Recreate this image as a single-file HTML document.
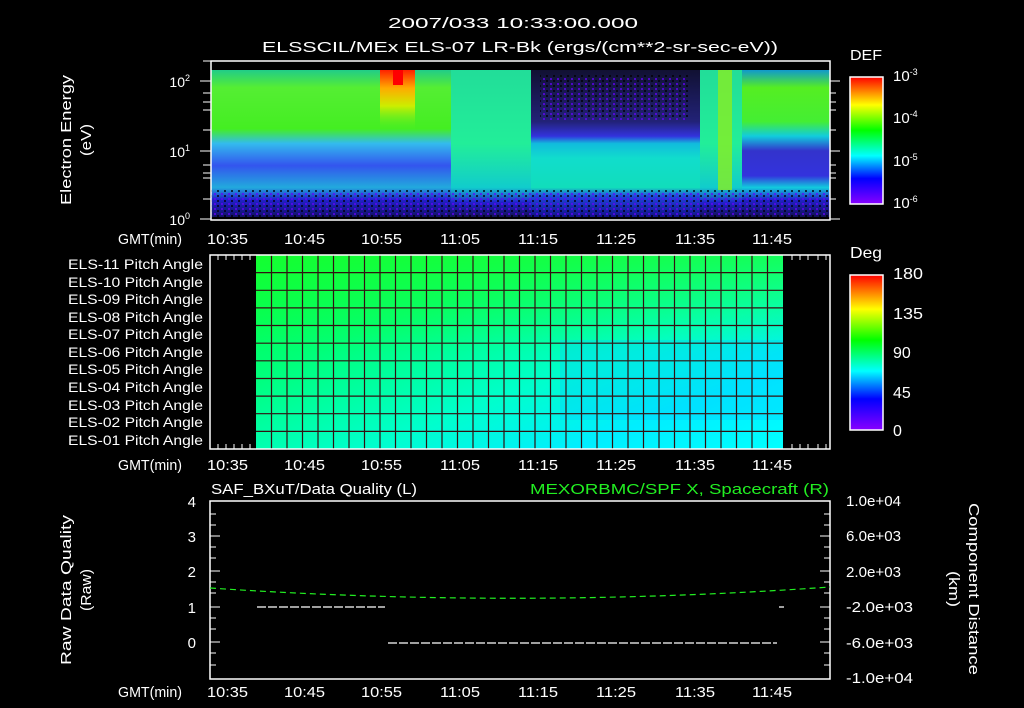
<!DOCTYPE html>
<html><head><meta charset="utf-8"><style>
html,body{margin:0;padding:0;background:#000;}
svg{display:block;font-family:"Liberation Sans",sans-serif;}
</style></head><body>
<svg width="1024" height="708" viewBox="0 0 1024 708" xmlns="http://www.w3.org/2000/svg">
<defs>
<linearGradient id="rb" x1="0" y1="0" x2="0" y2="1">
<stop offset="0" stop-color="#f00"/><stop offset="0.22" stop-color="#ff0"/><stop offset="0.42" stop-color="#0f0"/><stop offset="0.62" stop-color="#0ff"/><stop offset="0.8" stop-color="#00f"/><stop offset="1" stop-color="#80f"/>
</linearGradient>
<linearGradient id="left" x1="0" y1="0" x2="0" y2="1">
<stop offset="0" stop-color="#2c8"/><stop offset="0.12" stop-color="#5e3"/><stop offset="0.4" stop-color="#4e2"/><stop offset="0.5" stop-color="#3be"/><stop offset="0.65" stop-color="#35e"/><stop offset="0.8" stop-color="#2ad"/><stop offset="0.88" stop-color="#22c"/><stop offset="1" stop-color="#116"/>
</linearGradient>
<linearGradient id="mid" x1="0" y1="0" x2="0" y2="1">
<stop offset="0" stop-color="#113"/><stop offset="0.35" stop-color="#227"/><stop offset="0.45" stop-color="#33d"/><stop offset="0.5" stop-color="#1bd"/><stop offset="0.6" stop-color="#1dc"/><stop offset="0.8" stop-color="#1db"/><stop offset="0.86" stop-color="#24d"/><stop offset="1" stop-color="#118"/>
</linearGradient>
<linearGradient id="right" x1="0" y1="0" x2="0" y2="1">
<stop offset="0" stop-color="#19c"/><stop offset="0.12" stop-color="#5e2"/><stop offset="0.35" stop-color="#4e3"/><stop offset="0.45" stop-color="#1cd"/><stop offset="0.55" stop-color="#33c"/><stop offset="0.72" stop-color="#33d"/><stop offset="0.8" stop-color="#1cd"/><stop offset="0.88" stop-color="#22c"/><stop offset="1" stop-color="#115"/>
</linearGradient>
<linearGradient id="col" x1="0" y1="0" x2="0" y2="1">
<stop offset="0" stop-color="#2d9"/><stop offset="0.5" stop-color="#2e9"/><stop offset="0.8" stop-color="#1cc"/><stop offset="0.9" stop-color="#22c"/><stop offset="1" stop-color="#115"/>
</linearGradient>
<linearGradient id="spk" x1="0" y1="0" x2="0" y2="1">
<stop offset="0" stop-color="#f20"/><stop offset="0.3" stop-color="#fa0"/><stop offset="0.6" stop-color="#ce0"/><stop offset="1" stop-color="#5e2" stop-opacity="0"/>
</linearGradient>
<linearGradient id="pa" x1="0" y1="0" x2="1" y2="1">
<stop offset="0" stop-color="#0f4"/><stop offset="0.3" stop-color="#0f7"/><stop offset="0.6" stop-color="#0fc"/><stop offset="0.8" stop-color="#0ef"/><stop offset="1" stop-color="#0ff"/>
</linearGradient>
<linearGradient id="patop" x1="0" y1="0" x2="0" y2="1">
<stop offset="0" stop-color="#2f2" stop-opacity="0.6"/><stop offset="0.5" stop-color="#2f2" stop-opacity="0"/>
</linearGradient>
<pattern id="noise" width="7" height="5" patternUnits="userSpaceOnUse">
<rect x="0" y="0" width="2" height="2" fill="#000"/><rect x="4" y="3" width="2" height="2" fill="#60f"/>
</pattern>
</defs>

<g fill="#fff" font-size="15" text-anchor="middle" lengthAdjust="spacingAndGlyphs">
<text x="513" y="28" textLength="250" lengthAdjust="spacingAndGlyphs">2007/033 10:33:00.000</text>
<text x="520" y="52" textLength="516" lengthAdjust="spacingAndGlyphs">ELSSCIL/MEx ELS-07 LR-Bk  (ergs/(cm**2-sr-sec-eV))</text>
</g>

<!-- Panel 1 -->
<rect x="211" y="70" width="240" height="147" fill="url(#left)"/>
<rect x="380" y="70" width="35" height="60" fill="url(#spk)"/>
<rect x="393" y="70" width="10" height="15" fill="#f00"/>
<rect x="451" y="70" width="80" height="147" fill="url(#col)"/>
<rect x="531" y="70" width="170" height="147" fill="url(#mid)"/>
<rect x="700" y="70" width="42" height="147" fill="url(#col)"/>
<rect x="718" y="70" width="14" height="120" fill="#8e2" opacity="0.8"/>
<rect x="742" y="70" width="88" height="147" fill="url(#right)"/>
<rect x="211" y="190" width="619" height="27" fill="url(#noise)" opacity="0.7"/>
<rect x="540" y="75" width="150" height="45" fill="url(#noise)" opacity="0.7"/>
<rect x="211" y="61" width="619" height="159" fill="none" stroke="#fff" stroke-width="1.5"/>
<g stroke="#fff" stroke-width="1">
<path d="M200 81H211M200 151H211M200 219H211M203 61H211M203 93H211M203 102H211M203 110H211M203 130H211M203 165H211M203 173H211M203 178H211M203 199H211"/>
<path d="M830 81H840M830 151H840M830 219H840M830 93H836M830 102H836M830 110H836M830 130H836M830 165H836M830 173H836M830 178H836M830 199H836"/>
</g>
<g fill="#fff" font-size="14" text-anchor="end">
<text x="190" y="87">10<tspan font-size="9" dy="-6">2</tspan></text>
<text x="190" y="157">10<tspan font-size="9" dy="-6">1</tspan></text>
<text x="190" y="225">10<tspan font-size="9" dy="-6">0</tspan></text>
</g>
<g fill="#fff" font-size="15" text-anchor="middle">
<text transform="translate(71,140) rotate(-90)" textLength="130" lengthAdjust="spacingAndGlyphs">Electron Energy</text>
<text transform="translate(91,140) rotate(-90)" textLength="32" lengthAdjust="spacingAndGlyphs">(eV)</text>
</g>

<!-- colorbar 1 -->
<rect x="850" y="77" width="33" height="127" fill="url(#rb)" stroke="#fff" stroke-width="1.5"/>
<g fill="#fff" font-size="15">
<text x="850" y="60" textLength="32" lengthAdjust="spacingAndGlyphs">DEF</text>
<text x="893" y="81">10<tspan font-size="9" dy="-6">-3</tspan></text>
<text x="893" y="123">10<tspan font-size="9" dy="-6">-4</tspan></text>
<text x="893" y="166">10<tspan font-size="9" dy="-6">-5</tspan></text>
<text x="893" y="208">10<tspan font-size="9" dy="-6">-6</tspan></text>
</g>

<!-- time labels -->
<g fill="#fff" font-size="15">
<text x="207" y="244" textLength="41" lengthAdjust="spacingAndGlyphs">10:35</text><text x="284" y="244" textLength="41" lengthAdjust="spacingAndGlyphs">10:45</text><text x="361" y="244" textLength="41" lengthAdjust="spacingAndGlyphs">10:55</text><text x="440" y="244" textLength="40" lengthAdjust="spacingAndGlyphs">11:05</text><text x="518" y="244" textLength="40" lengthAdjust="spacingAndGlyphs">11:15</text><text x="596" y="244" textLength="40" lengthAdjust="spacingAndGlyphs">11:25</text><text x="675" y="244" textLength="40" lengthAdjust="spacingAndGlyphs">11:35</text><text x="752" y="244" textLength="40" lengthAdjust="spacingAndGlyphs">11:45</text>
<text x="207" y="470" textLength="41" lengthAdjust="spacingAndGlyphs">10:35</text><text x="284" y="470" textLength="41" lengthAdjust="spacingAndGlyphs">10:45</text><text x="361" y="470" textLength="41" lengthAdjust="spacingAndGlyphs">10:55</text><text x="440" y="470" textLength="40" lengthAdjust="spacingAndGlyphs">11:05</text><text x="518" y="470" textLength="40" lengthAdjust="spacingAndGlyphs">11:15</text><text x="596" y="470" textLength="40" lengthAdjust="spacingAndGlyphs">11:25</text><text x="675" y="470" textLength="40" lengthAdjust="spacingAndGlyphs">11:35</text><text x="752" y="470" textLength="40" lengthAdjust="spacingAndGlyphs">11:45</text>
<text x="207" y="697" textLength="41" lengthAdjust="spacingAndGlyphs">10:35</text><text x="284" y="697" textLength="41" lengthAdjust="spacingAndGlyphs">10:45</text><text x="361" y="697" textLength="41" lengthAdjust="spacingAndGlyphs">10:55</text><text x="440" y="697" textLength="40" lengthAdjust="spacingAndGlyphs">11:05</text><text x="518" y="697" textLength="40" lengthAdjust="spacingAndGlyphs">11:15</text><text x="596" y="697" textLength="40" lengthAdjust="spacingAndGlyphs">11:25</text><text x="675" y="697" textLength="40" lengthAdjust="spacingAndGlyphs">11:35</text><text x="752" y="697" textLength="40" lengthAdjust="spacingAndGlyphs">11:45</text>
<text x="118" y="244" textLength="64" lengthAdjust="spacingAndGlyphs">GMT(min)</text><text x="118" y="470" textLength="64" lengthAdjust="spacingAndGlyphs">GMT(min)</text><text x="118" y="697" textLength="64" lengthAdjust="spacingAndGlyphs">GMT(min)</text>
</g>

<!-- Panel 2 -->
<rect x="256" y="255" width="527" height="194" fill="url(#pa)"/>
<rect x="256" y="255" width="527" height="194" fill="url(#patop)"/>
<rect x="560" y="340" width="223" height="80" fill="#0cf" opacity="0.35"/>
<g stroke="#311" stroke-width="1.2">
<path d="M256 272.6H783M256 290.3H783M256 307.9H783M256 325.5H783M256 343.2H783M256 360.8H783M256 378.5H783M256 396.1H783M256 413.7H783M256 431.4H783"/>
<path d="M271.5 255V449M287 255V449M302.5 255V449M318 255V449M333.5 255V449M349 255V449M364.5 255V449M380 255V449M395.5 255V449M411 255V449M426.5 255V449M442 255V449M457.5 255V449M473 255V449M488.5 255V449M504 255V449M519.5 255V449M535 255V449M550.5 255V449M566 255V449M581.5 255V449M597 255V449M612.5 255V449M628 255V449M643.5 255V449M659 255V449M674.5 255V449M690 255V449M705.5 255V449M721 255V449M736.5 255V449M752 255V449M767.5 255V449"/>
</g>
<g stroke="#fff" stroke-width="1">
<path d="M218 255v5M226 255v5M234 255v5M242 255v5M250 255v5M218 449v-5M226 449v-5M234 449v-5M242 449v-5M250 449v-5M818 255v5M826 255v5M818 449v-5M826 449v-5M792 255v5M800 255v5M808 255v5M792 449v-5M800 449v-5M808 449v-5"/>
</g>
<rect x="210" y="255" width="620" height="194" fill="none" stroke="#fff" stroke-width="1.5"/>
<g fill="#fff" font-size="14">
<text x="68" y="269" textLength="135" lengthAdjust="spacingAndGlyphs">ELS-11 Pitch Angle</text>
<text x="68" y="287" textLength="135" lengthAdjust="spacingAndGlyphs">ELS-10 Pitch Angle</text>
<text x="68" y="304" textLength="135" lengthAdjust="spacingAndGlyphs">ELS-09 Pitch Angle</text>
<text x="68" y="322" textLength="135" lengthAdjust="spacingAndGlyphs">ELS-08 Pitch Angle</text>
<text x="68" y="339" textLength="135" lengthAdjust="spacingAndGlyphs">ELS-07 Pitch Angle</text>
<text x="68" y="357" textLength="135" lengthAdjust="spacingAndGlyphs">ELS-06 Pitch Angle</text>
<text x="68" y="374" textLength="135" lengthAdjust="spacingAndGlyphs">ELS-05 Pitch Angle</text>
<text x="68" y="392" textLength="135" lengthAdjust="spacingAndGlyphs">ELS-04 Pitch Angle</text>
<text x="68" y="410" textLength="135" lengthAdjust="spacingAndGlyphs">ELS-03 Pitch Angle</text>
<text x="68" y="427" textLength="135" lengthAdjust="spacingAndGlyphs">ELS-02 Pitch Angle</text>
<text x="68" y="445" textLength="135" lengthAdjust="spacingAndGlyphs">ELS-01 Pitch Angle</text>
</g>
<rect x="850" y="275" width="33" height="155" fill="url(#rb)" stroke="#fff" stroke-width="1.5"/>
<g fill="#fff" font-size="16">
<text x="850" y="258" textLength="32" lengthAdjust="spacingAndGlyphs">Deg</text>
<text x="893" y="279" textLength="30" lengthAdjust="spacingAndGlyphs">180</text><text x="893" y="319" textLength="30" lengthAdjust="spacingAndGlyphs">135</text><text x="893" y="358">90</text><text x="893" y="398">45</text><text x="893" y="436">0</text>
</g>

<!-- Panel 3 -->
<rect x="210" y="501" width="620" height="178" fill="none" stroke="#fff" stroke-width="1.5"/>
<g stroke="#fff" stroke-width="1">
<path d="M210 514H216M210 525H216M210 536H220M210 547H216M210 558H216M210 571H220M210 582H216M210 593H216M210 607H220M210 618H216M210 629H216M210 642H220M210 653H216M210 665H216"/>
<path d="M830 514H824M830 525H824M830 536H820M830 547H824M830 558H824M830 571H820M830 582H824M830 593H824M830 607H820M830 618H824M830 629H824M830 642H820M830 653H824M830 665H824"/>
</g>
<path d="M210 588 Q520 609 830 587" stroke="#2e2" stroke-width="1.2" fill="none" stroke-dasharray="6,4"/>
<path d="M257 607H385M388 643H777M779 607H784" stroke="#fff" stroke-width="1.2" stroke-dasharray="9,2"/>
<g fill="#fff" font-size="15">
<text x="211" y="494" textLength="206" lengthAdjust="spacingAndGlyphs">SAF_BXuT/Data Quality (L)</text>
<text x="196" y="507" text-anchor="end">4</text>
<text x="196" y="542" text-anchor="end">3</text>
<text x="196" y="577" text-anchor="end">2</text>
<text x="196" y="613" text-anchor="end">1</text>
<text x="196" y="648" text-anchor="end">0</text>
<text x="846" y="506" textLength="55" lengthAdjust="spacingAndGlyphs">1.0e+04</text>
<text x="846" y="541" textLength="55" lengthAdjust="spacingAndGlyphs">6.0e+03</text>
<text x="846" y="577" textLength="55" lengthAdjust="spacingAndGlyphs">2.0e+03</text>
<text x="846" y="612" textLength="67" lengthAdjust="spacingAndGlyphs">-2.0e+03</text>
<text x="846" y="648" textLength="67" lengthAdjust="spacingAndGlyphs">-6.0e+03</text>
<text x="846" y="683" textLength="67" lengthAdjust="spacingAndGlyphs">-1.0e+04</text>
</g>
<text x="530" y="494" fill="#2e2" font-size="15" textLength="299" lengthAdjust="spacingAndGlyphs">MEXORBMC/SPF X, Spacecraft (R)</text>
<g fill="#fff" font-size="15" text-anchor="middle">
<text transform="translate(71,590) rotate(-90)" textLength="150" lengthAdjust="spacingAndGlyphs">Raw Data Quality</text>
<text transform="translate(91,590) rotate(-90)" textLength="42" lengthAdjust="spacingAndGlyphs">(Raw)</text>
<text transform="translate(969,589) rotate(90)" textLength="172" lengthAdjust="spacingAndGlyphs">Component Distance</text>
<text transform="translate(949,589) rotate(90)" textLength="36" lengthAdjust="spacingAndGlyphs">(km)</text>
</g>
</svg>
</body></html>
